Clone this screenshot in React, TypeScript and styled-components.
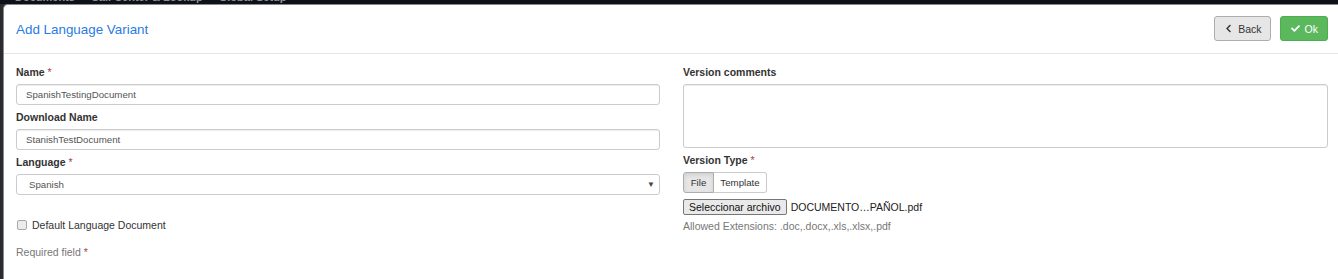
import React from "react";
import styled, { createGlobalStyle } from "styled-components";
import { FaChevronLeft, FaCheck } from "react-icons/fa";

const Global = createGlobalStyle`
  html, body { margin: 0; padding: 0; }
  body {
    background: #2b2c30;
    font-family: "Liberation Sans", Arial, sans-serif;
    overflow: hidden;
    width: 1338px;
    height: 279px;
  }
`;

const Page = styled.div`
  display: flex;
  flex-direction: column;
  height: 279px;
`;

const NavBar = styled.div`
  height: 4px;
  flex: none;
  overflow: hidden;
  background: #0e1117;
  display: flex;
  gap: 16px;
  padding-left: 15px;
`;

const NavItem = styled.span`
  display: block;
  flex: none;
  margin-top: -9px;
  font-size: 11px;
  line-height: 12px;
  font-weight: bold;
  color: #8d9099;
  white-space: nowrap;
`;

const Modal = styled.div`
  flex: 1;
  margin-left: 3px;
  background: #fff;
  border-left: 1px solid #8a8a8a;
  border-top: 1px solid #8a8a8a;
  border-top-left-radius: 5px;
  display: flex;
  flex-direction: column;
`;

const Header = styled.div`
  height: 49px;
  box-sizing: border-box;
  border-bottom: 1px solid #e5e5e5;
  display: flex;
  align-items: center;
  justify-content: space-between;
  padding: 0 10px 0 12px;
`;

const Title = styled.h4`
  margin: 0;
  font-weight: normal;
  font-size: 13.4px;
  color: #2a7be4;
  padding-top: 1px;
`;

const Actions = styled.div`
  display: flex;
  gap: 9px;
  padding-bottom: 1px;
`;

const Btn = styled.button<{ $variant: "default" | "success" }>`
  height: 25px;
  box-sizing: border-box;
  border-radius: 3px;
  font-family: "Liberation Sans", Arial, sans-serif;
  font-size: 10.5px;
  display: flex;
  align-items: center;
  gap: 5px;
  padding: ${(p) => (p.$variant === "success" ? "0 9px 0 10px" : "0 8px 0 9px")};
  cursor: pointer;
  ${(p) =>
    p.$variant === "success"
      ? `background:#5cb85c;border:1px solid #4cae4c;color:#fff;`
      : `background:#e6e6e6;border:1px solid #adadad;color:#333;`}
  svg { display: block; }
`;

const Body = styled.div`
  display: grid;
  grid-template-columns: 644px 645px;
  column-gap: 23px;
  padding: 11px 10px 0 12px;
`;

const Col = styled.div`
  display: flex;
  flex-direction: column;
`;

const Label = styled.label<{ $mt?: number }>`
  display: block;
  font-size: 10.5px;
  line-height: 14px;
  font-weight: bold;
  color: #333;
  margin: ${(p) => p.$mt ?? 0}px 0 5px;
`;

const Req = styled.span`
  color: #a94442;
  font-weight: normal;
`;

const Input = styled.input`
  height: 21px;
  box-sizing: border-box;
  border: 1px solid #ccc;
  border-radius: 3px;
  box-shadow: inset 0 1px 1px rgba(0, 0, 0, 0.075);
  padding: 0 9px;
  font-family: "Liberation Sans", Arial, sans-serif;
  font-size: 9.7px;
  color: #555;
  outline: none;
`;

const Group = styled.div`
  display: flex;
  flex-direction: column;
  margin-bottom: 5px;
`;

const SelectBox = styled.div`
  height: 21px;
  box-sizing: border-box;
  border: 1px solid #ccc;
  border-radius: 3px;
  display: flex;
  align-items: center;
  justify-content: space-between;
  padding: 0 4px 0 12px;
  font-size: 9.7px;
  color: #555;
`;

const Arrow = styled.span`
  font-size: 8px;
  color: #444;
`;

const CheckRow = styled.div`
  display: flex;
  align-items: center;
  gap: 5px;
  margin-top: 18px;
  margin-left: 1px;
  font-size: 10.5px;
  line-height: 14px;
  color: #333;
`;

const Box = styled.span`
  width: 8px;
  height: 8px;
  border: 1px solid #a8a8a8;
  border-radius: 2px;
  background: #ececec;
`;

const Note = styled.div<{ $mt: number }>`
  margin-top: ${(p) => p.$mt}px;
  font-size: 10.5px;
  line-height: 14px;
  color: #777;
`;

const TextArea = styled.textarea`
  height: 64px;
  box-sizing: border-box;
  border: 1px solid #ccc;
  border-radius: 3px;
  resize: none;
  outline: none;
  box-shadow: inset 0 1px 1px rgba(0, 0, 0, 0.075);
`;

const Toggle = styled.div`
  display: flex;
`;

const ToggleBtn = styled.button<{ $active?: boolean; $w: number }>`
  width: ${(p) => p.$w}px;
  height: 21px;
  box-sizing: border-box;
  font-family: "Liberation Sans", Arial, sans-serif;
  font-size: 9.7px;
  color: #333;
  padding: 0;
  margin: 0;
  border: 1px solid ${(p) => (p.$active ? "#adadad" : "#ccc")};
  background: ${(p) => (p.$active ? "#e6e6e6" : "#fff")};
  box-shadow: ${(p) => (p.$active ? "inset 0 2px 4px rgba(0,0,0,0.1)" : "none")};
  &:first-child { border-radius: 3px 0 0 3px; }
  &:last-child { border-radius: 0 3px 3px 0; border-left: none; }
`;

const FileRow = styled.div`
  display: flex;
  align-items: center;
  gap: 4px;
  margin-top: 6px;
  font-size: 10.5px;
  color: #222;
`;

const FileBtn = styled.button`
  height: 16px;
  box-sizing: border-box;
  padding: 0 5px;
  font-family: "Liberation Sans", Arial, sans-serif;
  font-size: 10.5px;
  color: #111;
  background: #e9e9e9;
  border: 1px solid #767676;
  border-radius: 2px;
`;

export default function App() {
  return (
    <Page>
      <Global />
      <NavBar>
        <NavItem>Documents</NavItem>
        <NavItem>Call Center &amp; Lookup</NavItem>
        <NavItem>Global Setup</NavItem>
      </NavBar>
      <Modal>
        <Header>
          <Title>Add Language Variant</Title>
          <Actions>
            <Btn $variant="default">
              <FaChevronLeft size={9} />
              Back
            </Btn>
            <Btn $variant="success">
              <FaCheck size={9} />
              Ok
            </Btn>
          </Actions>
        </Header>
        <Body>
          <Col>
            <Group>
              <Label>
                Name <Req>*</Req>
              </Label>
              <Input defaultValue="SpanishTestingDocument" />
            </Group>
            <Group>
              <Label>Download Name</Label>
              <Input defaultValue="StanishTestDocument" />
            </Group>
            <Group>
              <Label>
                Language <Req>*</Req>
              </Label>
              <SelectBox>
                Spanish
                <Arrow>▼</Arrow>
              </SelectBox>
            </Group>
            <CheckRow>
              <Box />
              Default Language Document
            </CheckRow>
            <Note $mt={13}>
              Required field <Req>*</Req>
            </Note>
          </Col>
          <Col>
            <Label>Version comments</Label>
            <TextArea />
            <Label $mt={5}>
              Version Type <Req>*</Req>
            </Label>
            <Toggle>
              <ToggleBtn $active $w={31}>File</ToggleBtn>
              <ToggleBtn $w={53}>Template</ToggleBtn>
            </Toggle>
            <FileRow>
              <FileBtn>Seleccionar archivo</FileBtn>
              DOCUMENTO…PAÑOL.pdf
            </FileRow>
            <Note $mt={4}>Allowed Extensions: .doc,.docx,.xls,.xlsx,.pdf</Note>
          </Col>
        </Body>
      </Modal>
    </Page>
  );
}
